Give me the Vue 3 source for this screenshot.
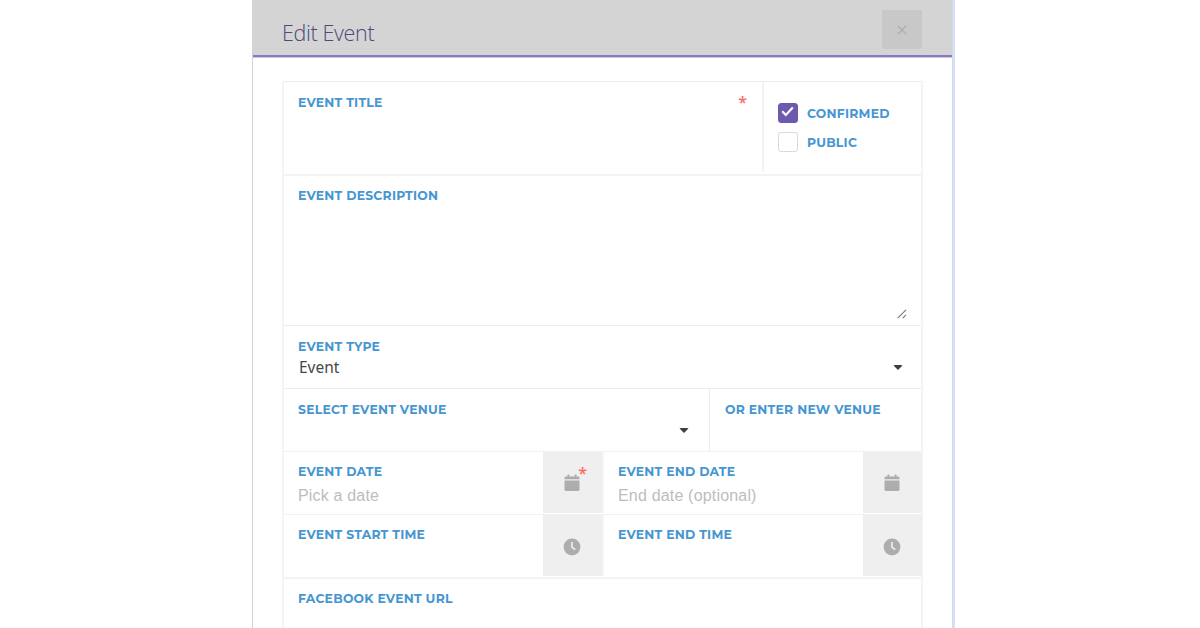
<template>
  <div class="page">
    <div class="modal">
      <header class="modal-header">
        <h2 class="modal-title">Edit Event</h2>
        <button type="button" class="close-btn" aria-label="Close">
          <svg width="12" height="12" viewBox="0 0 12 12">
            <path d="M2 2l8 8M10 2l-8 8" fill="none" stroke="#b0b0b0" stroke-width="1.7" />
          </svg>
        </button>
      </header>

      <form class="event-form">
        <div class="row row-title">
          <div class="cell grow">
            <label class="label">Event Title</label>
            <span class="required">*</span>
          </div>
          <div class="cell checks">
            <div v-for="c in checks" :key="c.text" class="check">
              <span class="box" :class="{ checked: c.on }">
                <svg v-if="c.on" width="14" height="12" viewBox="0 0 14 12">
                  <path d="M1.2 5.2l3.6 3.7 7-7.3" fill="none" stroke="#fff" stroke-width="2.1" />
                </svg>
              </span>
              <span class="label">{{ c.text }}</span>
            </div>
          </div>
        </div>

        <div class="row row-desc">
          <div class="cell grow">
            <label class="label">Event Description</label>
            <svg class="resizer" width="10" height="10" viewBox="0 0 10 10">
              <path d="M.7 9.2L9 .9M5.7 9.2L9 5.9" fill="none" stroke="#777" stroke-width="1.1" />
            </svg>
          </div>
        </div>

        <div class="row">
          <div class="cell grow">
            <label class="label">Event Type</label>
            <div class="select-value">Event</div>
            <span class="caret"></span>
          </div>
        </div>

        <div class="row">
          <div class="cell grow">
            <label class="label">Select Event Venue</label>
            <span class="caret caret-venue"></span>
          </div>
          <div class="cell new-venue">
            <label class="label">Or Enter New Venue</label>
          </div>
        </div>

        <div v-for="(row, i) in pickers" :key="i" class="row row-picker">
          <div v-for="p in row" :key="p.text" class="picker">
            <div class="cell grow">
              <label class="label">{{ p.text }}</label>
              <div class="placeholder">{{ p.placeholder }}</div>
            </div>
            <div class="addon">
              <svg v-if="p.icon === 'calendar'" width="16" height="18" viewBox="0 0 16 18">
                <path d="M.5 5.3V4c0-.8.6-1.4 1.4-1.4h1.5V1c0-.3.2-.5.5-.5h1c.3 0 .5.2.5.5v1.6h5.2V1c0-.3.2-.5.5-.5h1c.3 0 .5.2.5.5v1.6h1.5c.8 0 1.4.6 1.4 1.4v1.3z" />
                <path d="M.5 6.4h15v9.1c0 .9-.6 1.5-1.4 1.5H1.900c-.8 0-1.400-.6-1.400-1.500z" />
              </svg>
              <svg v-else class="clock" width="18" height="18" viewBox="0 0 18 18">
                <circle cx="9" cy="9" r="8.4" />
                <path d="M8.9 4v5.2l3.4 2.5" fill="none" stroke="#efefef" stroke-width="1.6" />
              </svg>
              <span v-if="p.required" class="required">*</span>
            </div>
          </div>
        </div>

        <div class="row row-last">
          <div class="cell grow">
            <label class="label">Facebook Event URL</label>
          </div>
        </div>
      </form>
    </div>
  </div>
</template>

<script setup>
const checks = [
  { text: 'Confirmed', on: true },
  { text: 'Public', on: false }
]

const pickers = [
  [
    { text: 'Event Date', placeholder: 'Pick a date', icon: 'calendar', required: true },
    { text: 'Event End Date', placeholder: 'End date (optional)', icon: 'calendar' }
  ],
  [
    { text: 'Event Start Time', icon: 'clock' },
    { text: 'Event End Time', icon: 'clock' }
  ]
]
</script>

<style>
body {
  background: #fff;
}
</style>

<style scoped>
.page {
  height: 628px;
  overflow: hidden;
  display: flex;
  padding-left: 252px;
  box-sizing: border-box;
}

.page * {
  box-sizing: border-box;
}

.modal {
  width: 703px;
  border-left: 1px solid #d3d3d3;
  border-right: 2px solid #d3dffc;
  box-shadow: inset -1px 0 0 #dcdcdc;
  overflow: hidden;
}

.modal-header {
  height: 57px;
  margin-right: 1px;
  padding: 10px 30px 0 29px;
  background: #d4d4d4;
  border-bottom: 2px solid #8c7abf;
  display: flex;
  justify-content: space-between;
  box-shadow: 0 1px 0 #cdc5e2;
}

.modal-title {
  margin: 8px 0 0;
  font: 300 21.5px/30px "Open Sans", sans-serif;
  letter-spacing: -0.35px;
  color: #4f4878;
  white-space: nowrap;
}

.close-btn {
  width: 40px;
  height: 39px;
  padding: 0;
  border: 0;
  border-radius: 2px;
  background: #c8c8c8;
  display: flex;
  align-items: center;
  justify-content: center;
}

.event-form {
  margin: 24px 0 0 29px;
  width: 641px;
  border-left: 2px solid #f4f4f4;
  border-right: 2px solid #f4f4f4;
}

.row {
  height: 63px;
  display: flex;
  border-top: 1px solid #ededed;
}

.row-title {
  height: 93px;
  padding-bottom: 2px;
}

.row-desc {
  height: 151px;
  border-top: 2px solid #f3f3f3;
}

.row-picker {
  border-top: 1px solid #f1f1f1;
  padding-bottom: 1px;
}

.row-last {
  height: 80px;
  border-top: 2px solid #f3f3f3;
}

.cell {
  position: relative;
  padding: 13px 14px 0 14px;
}

.row-desc .cell,
.row-last .cell {
  padding-top: 12px;
}

.grow {
  flex: 1;
  min-width: 0;
}

.label {
  display: block;
  font: 700 12.4px/15px Montserrat, Inter, sans-serif;
  color: #4596d1;
  text-transform: uppercase;
  white-space: nowrap;
  letter-spacing: 0.24px;
}

.required {
  position: absolute;
  top: 11px;
  right: 15px;
  font: 600 16px/18px "Open Sans", sans-serif;
  color: #fa6b66;
}

.checks {
  width: 159px;
  border-left: 2px solid #f3f3f3;
  padding: 20px 0 0 14px;
}

.check {
  display: flex;
  align-items: center;
  gap: 9px;
  height: 22px;
  margin-bottom: 7px;
}

.box {
  width: 20px;
  height: 20px;
  border: 1px solid #d8d8d8;
  border-radius: 3px;
  display: flex;
  justify-content: center;
  padding-top: 2px;
}

.box.checked {
  background: #6d59ad;
  border-color: #6d59ad;
}

.box svg {
  flex: none;
}

.resizer {
  position: absolute;
  right: 14px;
  bottom: 6px;
}

.select-value {
  margin: 2px 0 0 1px;
  font: 400 15.5px/22px "Noto Sans", sans-serif;
  color: #484848;
}

.caret {
  position: absolute;
  top: 39px;
  right: 18px;
  border: 5px solid transparent;
  border-top: 5.5px solid #404040;
  border-bottom: 0;
  border-radius: 2px;
}

.caret-venue {
  right: 20px;
}

.new-venue {
  width: 212px;
  padding-left: 15px;
  border-left: 1px solid #ededed;
}

.picker {
  flex: 1;
  display: flex;
}

.picker + .picker {
  border-left: 2px solid #f5f5f5;
  margin-right: -1px;
}

.picker .cell {
  padding-top: 12px;
}

.placeholder {
  margin-top: 7px;
  font: 400 16px/20px "Liberation Sans", Arial, sans-serif;
  letter-spacing: 0.18px;
  color: #bdbdbd;
  white-space: nowrap;
}

.addon {
  position: relative;
  width: 59px;
  padding-right: 2px;
  background: #efefef;
  display: flex;
  align-items: center;
  justify-content: center;
}

.addon .required {
  top: 12px;
}

.addon svg {
  fill: #adadad;
}

.addon .clock {
  margin-top: 2px;
}
</style>
